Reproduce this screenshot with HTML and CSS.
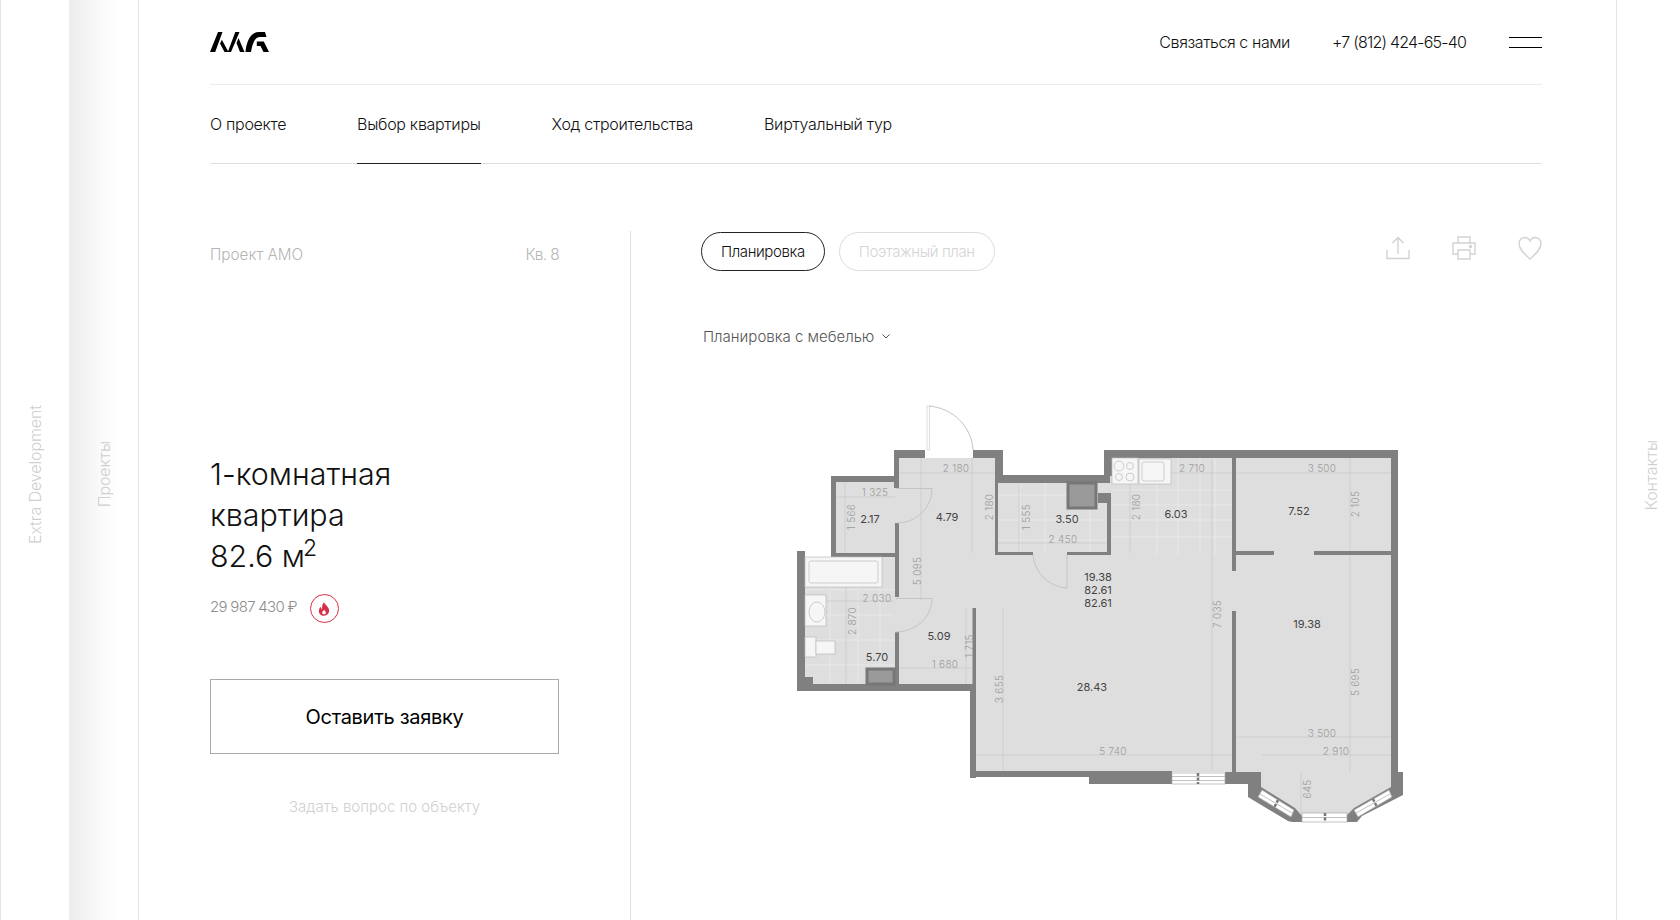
FILE: index.html
```html
<!DOCTYPE html>
<html lang="ru">
<head>
    <meta charset="UTF-8">
    <title>Проект АМО, Кв. 8</title>
    <link rel="stylesheet" href="styles.css">
</head>
<body>
    <div class="rail rail-first"><span class="rail-label">Extra Development</span></div>
    <div class="rail rail-second"><span class="rail-label">Проекты</span></div>

    <main class="page">
        <header class="top">
            <svg class="logo" viewBox="0 0 59 20" aria-label="AMG">
                <path d="M0 20L8 0H12.5L5.2 20Z M11.9 7.7L18.5 20H14.5L10 11.5Z M17.8 20L25.3 0H29.5L21 20Z M28.5 6L34.5 20H30L26.5 11Z M35.5 20C36.5 9 40.5 0 49 0H55L56.5 5H50C45.5 5 42.5 10 41 20Z M46.8 9.5H53.8L59 20H53.5L50.5 14H46.8Z"/>
            </svg>
            <div class="top-right">
                <a class="top-link">Связаться с нами</a>
                <a class="top-phone">+7 (812) 424-65-40</a>
                <div class="burger"><i></i><i></i></div>
            </div>
        </header>

        <nav class="tabs">
            <a class="tab">О проекте</a>
            <a class="tab active">Выбор квартиры</a>
            <a class="tab">Ход строительства</a>
            <a class="tab">Виртуальный тур</a>
        </nav>

        <div class="content">
            <section class="info">
                <div class="info-head">
                    <span>Проект АМО</span>
                    <span class="flat-no">Кв. 8</span>
                </div>
                <h1 class="title">1-комнатная<br>квартира<br>82.6 м<sup>2</sup></h1>
                <div class="price-row">
                    <span class="price">29 987 430 ₽</span>
                    <span class="hot">
                        <svg viewBox="0 0 16 18" width="12" height="14">
                            <path d="M8 0C9 3 13 5 14.5 9C16 14 12.5 18 8 18C3.5 18 0 14.5 1.5 9.5C2 8 3 6.5 3.5 6C3.7 7.5 4.5 8.5 5.5 9C5 5.5 6 2 8 0ZM8 10C7 11.5 5.5 12.5 5.5 14C5.5 15.5 6.7 16 8 16C9.3 16 10.5 15.5 10.5 14C10.5 12.5 9 11.5 8 10Z"/>
                        </svg>
                    </span>
                </div>
                <button class="request">Оставить заявку</button>
                <a class="ask">Задать вопрос по объекту</a>
            </section>

            <section class="plan-side">
                <div class="plan-bar">
                    <div class="pills">
                        <button class="pill active">Планировка</button>
                        <button class="pill">Поэтажный план</button>
                    </div>
                    <div class="actions">
                        <svg viewBox="0 0 24 24" width="24" height="24">
                            <path d="M1 14V22.5H23V14M12 18V1.5M6.5 7L12 1.5L17.5 7"/>
                        </svg>
                        <svg viewBox="0 0 24 24" width="24" height="24">
                            <path d="M6 7V1H18V7M6 18H1V7H23V18H18M6 14H18V23H6Z"/>
                            <circle cx="18.5" cy="10.5" r="1"/>
                        </svg>
                        <svg viewBox="0 0 24 24" width="24" height="24">
                            <path d="M12 23C7 18.5 1 13.5 1 7.5C1 4 3.5 1.5 6.5 1.5C9 1.5 11 2.8 12 5C13 2.8 15 1.5 17.5 1.5C20.5 1.5 23 4 23 7.5C23 13.5 17 18.5 12 23Z"/>
                        </svg>
                    </div>
                </div>
                <div class="plan-select">
                    Планировка с мебелью
                    <svg viewBox="0 0 8 5" width="8" height="5"><path d="M0.5 0.5L4 4L7.5 0.5"/></svg>
                </div>

                <svg class="plan" viewBox="790 400 620 440" width="620" height="440">
                    <!-- floor -->
                    <polygon class="floor" points="805,557 835,557 835,481 898,481 898,458 995,458 995,483 1108,483 1108,458 1392,458 1392,772 1392,790 1356,812 1340,818 1292,818 1275,810 1258,790 1258,772 1232,772 976,772 976,690 805,690"/>

                    <!-- tile lines -->
                    <path class="tile" d="M805 590H894M805 615H894M805 640H894M805 665H894M830 557V684M858 557V684M880 557V684"/>
                    <path class="tile" d="M998 495H1108M998 520H1108M998 540H1108M1020 483V552M1045 483V552M1090 510V552"/>
                    <path class="tile" d="M1112 490H1232M1112 505H1232M1112 520H1232M1112 537H1232M1157 458V555M1178 458V555M1200 458V555M1215 458V555"/>

                    <!-- dimension lines -->
                    <path class="dim" d="M835 497H895M845 481V553M898 473H995M972 458V553M921 458V600M1019 483V552M998 543H1108M805 601H894M846 557V684M898 668H973M966 608V684M1003 608V770M976 755H1232M1130 458V553M1112 473H1232M1212 460V770M1236 473H1391M1350 458V772M1236 737H1391M1262 755H1391M1301 772V812"/>

                    <!-- walls -->
                    <g class="wall">
                        <rect x="797" y="551" width="8" height="140"/>
                        <rect x="797" y="684" width="179" height="7"/>
                        <rect x="831" y="476" width="5" height="80"/>
                        <rect x="831" y="476" width="67" height="6"/>
                        <rect x="831" y="553" width="67" height="4"/>
                        <rect x="894" y="450" width="5" height="38"/>
                        <rect x="895" y="523" width="4" height="74"/>
                        <rect x="895" y="632" width="4" height="54"/>
                        <rect x="894" y="450" width="31" height="8"/>
                        <rect x="973" y="450" width="30" height="8"/>
                        <rect x="995" y="450" width="8" height="33"/>
                        <rect x="995" y="475" width="115" height="8"/>
                        <rect x="995" y="475" width="3" height="80"/>
                        <rect x="995" y="552" width="38" height="3"/>
                        <rect x="1067" y="552" width="44" height="3"/>
                        <rect x="1107" y="493" width="4" height="62"/>
                        <rect x="1104" y="450" width="8" height="26"/>
                        <rect x="1104" y="450" width="294" height="8"/>
                        <rect x="1391" y="450" width="7" height="325"/>
                        <rect x="1232" y="458" width="4" height="113"/>
                        <rect x="1232" y="611" width="4" height="162"/>
                        <rect x="1236" y="551" width="38" height="4"/>
                        <rect x="1314" y="551" width="77" height="4"/>
                        <rect x="972.5" y="608" width="3.5" height="80"/>
                        <rect x="970" y="684" width="6" height="94"/>
                        <rect x="970" y="771" width="202" height="6"/>
                        <rect x="1089" y="777" width="83" height="7"/>
                        <rect x="1225" y="772" width="36" height="12"/>
                        <polygon points="1248,784 1261,772 1261,787 1295,808 1302,816 1302,822 1292,822 1288,821 1248,797"/>
                        <polygon points="1391,772 1403,772 1403,795 1362,816 1357,822 1347,822 1347,815 1354,808 1391,787"/>
                    </g>

                    <!-- bay and balcony windows -->
                    <g class="glass">
                        <rect x="1172" y="773" width="53" height="11"/>
                        <path d="M1172 776.5H1225M1172 780.5H1225"/>
                        <polygon points="1258,797 1291,817 1294,810 1262,790"/>
                        <path d="M1260 794L1292 813"/>
                        <rect x="1302" y="813" width="45" height="9"/>
                        <path d="M1302 817.5H1347"/>
                        <polygon points="1358,817 1392,797 1389,790 1354,810"/>
                        <path d="M1356 813L1390 794"/>
                    </g>
                    <path class="mullion" d="M1198 773V784M1278 800L1274 808M1325 813V822M1373 799L1377 807"/>

                    <!-- shaft and small vent -->
                    <rect class="shaft" x="1068" y="483" width="28" height="25"/>
                    <rect class="wall-rect" x="1098" y="493" width="9" height="10"/>
                    <rect class="shaft" x="867" y="669" width="27" height="15"/>
                    <rect class="wall-rect" x="805" y="677" width="8" height="8"/>

                    <!-- fixtures -->
                    <g class="fixture">
                        <rect x="805" y="557" width="77" height="30"/>
                        <rect x="809" y="561" width="69" height="22" rx="2"/>
                        <rect x="805" y="595" width="21" height="31"/>
                        <ellipse cx="817" cy="612" rx="8" ry="10"/>
                        <rect x="805" y="637" width="11" height="20"/>
                        <rect x="816" y="641" width="19" height="13"/>
                        <rect x="1112" y="458" width="26" height="26"/>
                        <circle cx="1119" cy="466" r="5"/>
                        <circle cx="1130" cy="466" r="3.5"/>
                        <circle cx="1119" cy="477" r="3.5"/>
                        <circle cx="1130" cy="477" r="4"/>
                        <rect x="1139" y="459" width="32" height="25"/>
                        <rect x="1142" y="462" width="22" height="19" rx="2"/>
                    </g>

                    <!-- doors -->
                    <rect class="door-leaf" x="927" y="406" width="2.5" height="44"/>
                    <path class="door" d="M929 406C953 408 972 427 973 450"/>
                    <path class="door" d="M896 488.5H932C932 508 916 523 897 523"/>
                    <path class="door" d="M896 598.5H932C932 617 916 632 895 632"/>
                    <path class="door" d="M1067 555V588C1050 587 1035 574 1033 555"/>

                    <!-- room areas -->
                    <g class="area">
                        <text x="870" y="519">2.17</text>
                        <text x="947" y="517">4.79</text>
                        <text x="1067" y="519">3.50</text>
                        <text x="939" y="636">5.09</text>
                        <text x="877" y="657">5.70</text>
                        <text x="1092" y="687">28.43</text>
                        <text x="1098" y="577">19.38</text>
                        <text x="1098" y="590">82.61</text>
                        <text x="1098" y="603">82.61</text>
                        <text x="1176" y="514">6.03</text>
                        <text x="1299" y="511">7.52</text>
                        <text x="1307" y="624">19.38</text>
                    </g>

                    <!-- dimensions -->
                    <g class="size">
                        <text x="956" y="468">2 180</text>
                        <text x="875" y="492">1 325</text>
                        <text x="1063" y="539">2 450</text>
                        <text x="877" y="598">2 030</text>
                        <text x="945" y="664">1 680</text>
                        <text x="1113" y="751">5 740</text>
                        <text x="1192" y="468">2 710</text>
                        <text x="1322" y="468">3 500</text>
                        <text x="1322" y="733">3 500</text>
                        <text x="1336" y="751">2 910</text>
                        <text transform="rotate(-90 851 517)" x="851" y="517">1 566</text>
                        <text transform="rotate(-90 989 507)" x="989" y="507">2 180</text>
                        <text transform="rotate(-90 1026 517)" x="1026" y="517">1 555</text>
                        <text transform="rotate(-90 917 571)" x="917" y="571">5 095</text>
                        <text transform="rotate(-90 852 621)" x="852" y="621">2 870</text>
                        <text transform="rotate(-90 969 646)" x="969" y="646">1 715</text>
                        <text transform="rotate(-90 999 689)" x="999" y="689">3 655</text>
                        <text transform="rotate(-90 1136 507)" x="1136" y="507">2 180</text>
                        <text transform="rotate(-90 1217 614)" x="1217" y="614">7 035</text>
                        <text transform="rotate(-90 1355 504)" x="1355" y="504">2 105</text>
                        <text transform="rotate(-90 1355 682)" x="1355" y="682">5 695</text>
                        <text transform="rotate(-90 1307 789)" x="1307" y="789">645</text>
                    </g>
                </svg>
            </section>
        </div>
    </main>

    <div class="rail rail-last"><span class="rail-label">Контакты</span></div>
</body>
</html>
```

FILE: styles.css
```css
html, body {
    height: 100%;
}

body {
    margin: 0;
    height: 920px;
    overflow: hidden;
    display: flex;
    background-color: #fff;
    color: #111;
    font-family: Inter, "Noto Sans", sans-serif;
    font-weight: 300;
    font-size: 16px;
}

a {
    color: inherit;
    text-decoration: none;
}

button {
    font-family: inherit;
    font-weight: inherit;
    background: none;
    cursor: pointer;
}

/* side rails */
.rail {
    flex: none;
    display: flex;
    justify-content: center;
    align-items: center;
    box-sizing: border-box;
    width: 69px;
    border-left: 1px solid #e4e4e4;
    padding-top: 28px;
}

.rail-second {
    border-left: none;
    background: linear-gradient(to right, #ececec, #fafafa 45%, #fff 70%);
}

.rail-last {
    width: 64px;
    padding-top: 30px;
    padding-left: 4px;
}

.rail-label {
    writing-mode: vertical-rl;
    transform: rotate(180deg);
    color: #cfcfcf;
    font-size: 16px;
    letter-spacing: -0.1px;
    white-space: nowrap;
}

/* main column */
.page {
    flex: 1;
    box-sizing: border-box;
    border-left: 1px solid #e4e4e4;
    padding: 0 74px 0 71px;
    min-width: 0;
}

.top {
    display: flex;
    justify-content: space-between;
    align-items: center;
    height: 84px;
    border-bottom: 1px solid #ebebeb;
}

.logo {
    width: 59px;
    height: 20px;
    fill: #000;
}

.top-right {
    display: flex;
    align-items: center;
}

.top-link {
    margin-right: 42px;
    letter-spacing: -0.4px;
}

.top-phone {
    margin-right: 43px;
    letter-spacing: -0.8px;
}

.burger {
    width: 33px;
}

.burger i {
    display: block;
    height: 1px;
    background-color: #000;
    margin: 9px 0;
}

.tabs {
    display: flex;
    gap: 71px;
    height: 78px;
    border-bottom: 1px solid #dedede;
}

.tab {
    display: flex;
    align-items: center;
    height: 79px;
    box-sizing: border-box;
    border-bottom: 1px solid transparent;
    letter-spacing: -0.3px;
}

.tab.active {
    border-bottom-color: #222;
}

.content {
    display: flex;
    margin-top: 67px;
}

/* left column */
.info {
    flex: none;
    box-sizing: border-box;
    width: 421px;
    height: 690px;
    padding-right: 71px;
    padding-top: 14px;
    border-right: 1px solid #e0e0e0;
    display: flex;
    flex-direction: column;
}

.info-head {
    display: flex;
    justify-content: space-between;
    color: #b5b5b5;
    font-size: 15.3px;
}

.flat-no {
    letter-spacing: -0.6px;
}

.title {
    margin: 190px 0 0;
    font-size: 30.4px;
    font-weight: 300;
    line-height: 41px;
    color: #111;
}

.title sup {
    font-size: 23px;
    line-height: 0;
    margin-left: -2px;
}

.price-row {
    display: flex;
    align-items: center;
    margin-top: 17px;
    color: #8e8e8e;
    font-size: 15px;
}

.price {
    padding-bottom: 4px;
    letter-spacing: -0.7px;
}

.hot {
    display: flex;
    justify-content: center;
    align-items: center;
    box-sizing: border-box;
    width: 29px;
    height: 29px;
    margin-left: 13px;
    border: 1px solid #d9304a;
    border-radius: 50%;
    fill: #d9304a;
}

.request {
    height: 75px;
    margin-top: 56px;
    border: 1px solid #aaa;
    color: #000;
    font-size: 20px;
    font-weight: 400;
    letter-spacing: -0.3px;
}

.ask {
    margin-top: 43px;
    text-align: center;
    color: #d0d0d0;
    font-size: 15px;
}

/* right column */
.plan-side {
    flex: 1;
    min-width: 0;
    padding-left: 70px;
}

.plan-bar {
    display: flex;
    justify-content: space-between;
    align-items: flex-start;
}

.pills {
    display: flex;
    gap: 14px;
    margin-top: 1px;
}

.pill {
    height: 39px;
    padding: 0 19px;
    border: 1px solid #dcdcdc;
    border-radius: 20px;
    color: #d4d4d4;
    font-size: 15px;
    letter-spacing: -0.4px;
}

.pill.active {
    border-color: #222;
    color: #111;
}

.actions {
    display: flex;
    gap: 42px;
    margin-top: 5px;
}

.actions svg {
    fill: none;
    stroke: #d2d2d2;
    stroke-width: 1.4;
}

.plan-select {
    display: flex;
    align-items: center;
    gap: 8px;
    margin: 56px 0 0 2px;
    color: #555;
    font-size: 15px;
}

.plan-select svg {
    fill: none;
    stroke: #555;
    stroke-width: 1;
}

/* floor plan */
.plan {
    display: block;
    margin: 54px 0 0 89px;
}

.floor {
    fill: #dedede;
}

.tile {
    fill: none;
    stroke: #e8e8e8;
    stroke-width: 1;
}

.dim {
    fill: none;
    stroke: #c8c8c8;
    stroke-width: 0.7;
}

.wall rect,
.wall polygon,
.wall-rect {
    fill: #808080;
}

.shaft {
    fill: #9a9a9a;
    stroke: #777;
    stroke-width: 3;
}

.glass {
    fill: #fff;
    stroke: #a8a8a8;
    stroke-width: 0.7;
}

.mullion {
    fill: none;
    stroke: #777;
    stroke-width: 2.5;
    stroke-dasharray: 3 1.5;
}

.fixture {
    fill: #f6f6f6;
    stroke: #bbb;
    stroke-width: 0.7;
}

.door {
    fill: none;
    stroke: #c4c4c4;
    stroke-width: 1;
}

.door-leaf {
    fill: #fff;
    stroke: #cfcfcf;
    stroke-width: 0.7;
}

.area text {
    fill: #444;
    font-size: 11px;
    font-weight: 400;
    text-anchor: middle;
    dominant-baseline: central;
}

.size text {
    fill: #9c9c9c;
    font-size: 10px;
    font-weight: 300;
    text-anchor: middle;
    dominant-baseline: central;
    letter-spacing: 0.3px;
}
```
